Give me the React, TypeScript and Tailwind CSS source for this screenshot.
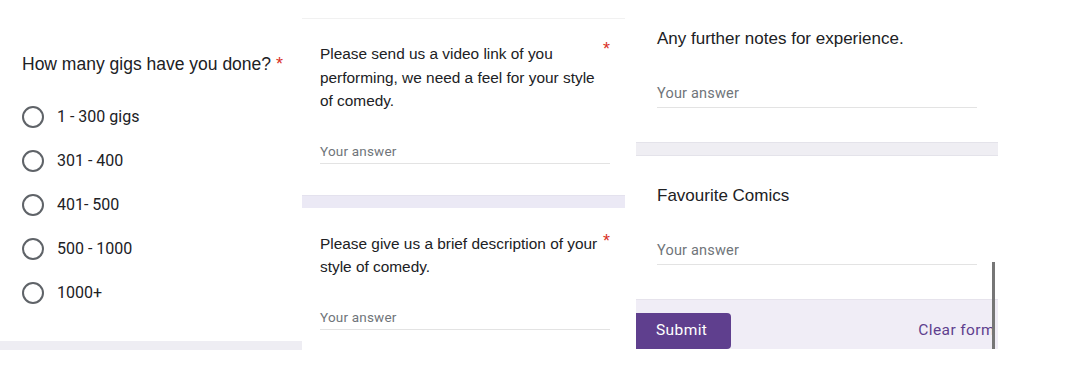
import React from 'react';

const OPTIONS = ['1 - 300 gigs', '301 - 400', '401- 500', '500 - 1000', '1000+'];

const sans = { fontFamily: '"Liberation Sans", Arial, sans-serif' };

function Asterisk({ className = '' }: { className?: string }) {
  return <span className={`text-[#d93025] text-[18px] ${className}`}>*</span>;
}

function AnswerLine({ size = 'sm', className = '' }: { size?: 'sm' | 'md'; className?: string }) {
  return (
    <div
      className={`border-b border-[#e3e3e3] font-['Roboto',sans-serif] text-[#70757a] tracking-[0.2px] ${
        size === 'md' ? 'text-[14.5px] leading-[23px] pb-[2px]' : 'text-[13.5px] leading-[22px] pb-[1px]'
      } ${className}`}
    >
      Your answer
    </div>
  );
}

// --- left card: radio question ---
function GigsCard() {
  return (
    <div className="w-[302px] shrink-0 flex flex-col">
      <div className="pt-[52px] pl-[22px] text-[17.5px] leading-[24px] text-[#202124]" style={sans}>
        How many gigs have you done? <Asterisk />
      </div>
      <div className="mt-[19px] pl-[22px] flex flex-col">
        {OPTIONS.map((o) => (
          <div key={o} className="h-[44px] flex items-center gap-[13px]">
            <div className="w-[22px] h-[22px] rounded-full border-2 border-[#5f6368]" />
            <span className="font-['Roboto',sans-serif] text-[16px] text-[#202124]">{o}</span>
          </div>
        ))}
      </div>
      <div className="mt-[26px] h-[9px] bg-[#eeedf3]" />
    </div>
  );
}

// --- middle card: two text questions ---
function ComedyCard() {
  return (
    <div className="w-[323px] shrink-0 flex flex-col">
      <div className="mt-[18px] h-px bg-[#f1f1f1]" />
      <div className="pl-[18px] pr-[15px]">
        <div className="pt-[23px] flex justify-between text-[15.4px] leading-[23.5px] text-[#202124]" style={sans}>
          <span className="w-[281px]">Please send us a video link of you performing, we need a feel for your style of comedy.</span>
          <Asterisk className="mt-[-4px]" />
        </div>
        <AnswerLine className="mt-[27px]" />
      </div>
      <div className="mt-[31px] h-[13px] bg-[#ebe9f5] border-t border-[#e4e2ee]" />
      <div className="pl-[18px] pr-[15px]">
        <div className="pt-[24px] flex justify-between text-[15.4px] leading-[23.5px] text-[#202124]" style={sans}>
          <span className="w-[285px]">Please give us a brief description of your style of comedy.</span>
          <Asterisk className="mt-[-2px]" />
        </div>
        <AnswerLine className="mt-[27px]" />
      </div>
    </div>
  );
}

// --- right card: notes, favourites and footer ---
function NotesCard() {
  return (
    <div className="relative ml-[11px] w-[362px] shrink-0 flex flex-col">
      <div className="pl-[21px] pr-[21px]">
        <div className="pt-[27px] text-[17px] leading-[24px] text-[#202124]" style={sans}>
          Any further notes for experience.
        </div>
        <AnswerLine size="md" className="mt-[31px]" />
      </div>
      <div className="mt-[34px] h-[14px] bg-[#efeef3] border-y border-[#e4e3ea]" />
      <div className="pl-[21px] pr-[21px]">
        <div className="pt-[28px] text-[17px] leading-[24px] text-[#202124]" style={sans}>
          Favourite Comics
        </div>
        <AnswerLine size="md" className="mt-[31px]" />
      </div>
      <div className="mt-[34px] h-[50px] bg-[#f0edf6] border-t border-[#e6e3ec] pt-[13px] flex items-start justify-between pr-[3px]">
        <button className="w-[95px] h-[36px] bg-[#5f3f8e] rounded-r-[4px] text-left pl-[20px] font-['Roboto',sans-serif] text-[15.5px] text-white tracking-[0.4px]">
          Submit
        </button>
        <span className="h-[36px] flex items-center font-['Roboto',sans-serif] text-[15.5px] text-[#5f3f8e] tracking-[0.4px]">
          Clear form
        </span>
      </div>
      <div className="absolute right-[3px] top-[262px] h-[87px] w-[3px] bg-[#767676]" />
    </div>
  );
}

export default function App() {
  return (
    <div className="w-[1080px] h-[375px] bg-white flex overflow-hidden">
      <GigsCard />
      <ComedyCard />
      <NotesCard />
    </div>
  );
}
